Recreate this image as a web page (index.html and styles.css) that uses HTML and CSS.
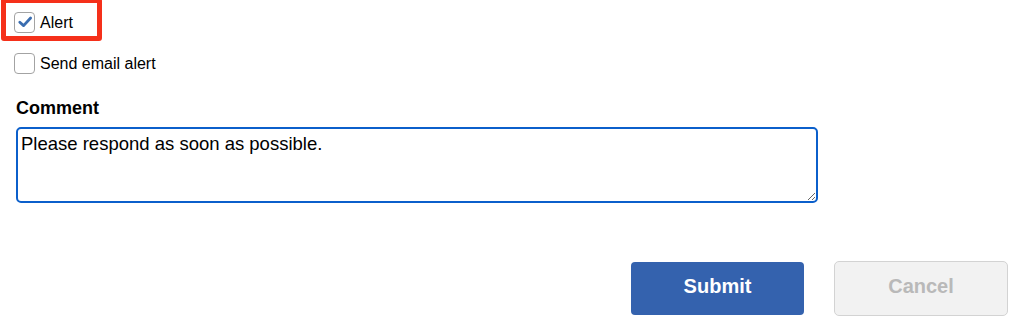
FILE: index.html
```html
<!DOCTYPE html>
<html lang="en">
<head>
<meta charset="utf-8">
<title>Alert form</title>
<link rel="stylesheet" href="styles.css">
</head>
<body>
<form class="form">
  <label class="check-row first">
    <span class="box checked">
      <svg viewBox="0 0 21 21" width="21" height="21" aria-hidden="true"><path d="M5.8 10.2 L9.6 13.6 L16.6 6" fill="none" stroke="#3a6db0" stroke-width="2.8" stroke-linecap="round" stroke-linejoin="round"/></svg>
    </span>
    <span class="check-text">Alert</span>
  </label>
  <label class="check-row second">
    <span class="box"></span>
    <span class="check-text">Send email alert</span>
  </label>
  <div class="field-label">Comment</div>
  <textarea class="comment">Please respond as soon as possible.</textarea>
  <div class="actions">
    <button type="button" class="btn primary">Submit</button>
    <button type="button" class="btn secondary">Cancel</button>
  </div>
  <div class="highlight"></div>
</form>
</body>
</html>
```

FILE: styles.css
```css
html, body {
  margin: 0;
  padding: 0;
  background: #ffffff;
}

body {
  font-family: "Liberation Sans", Arial, sans-serif;
  color: #000;
}

.form {
  position: relative;
  padding-left: 14px;
  padding-top: 12px;
}

.check-row {
  display: flex;
  align-items: center;
  gap: 5px;
  height: 21px;
  font-size: 16px;
}

.check-row.second {
  margin-top: 20px;
}

.box {
  box-sizing: border-box;
  width: 21px;
  height: 21px;
  border: 1.5px solid #a3a3a3;
  border-radius: 4px;
  background: #fff;
  display: flex;
  align-items: center;
  justify-content: center;
  flex: none;
}

.box svg {
  display: block;
  margin: -1.5px;
}

.check-text {
  line-height: 21px;
}

.field-label {
  font-weight: bold;
  font-size: 18px;
  line-height: 22px;
  margin-top: 23px;
  margin-left: 2px;
}

.comment {
  display: block;
  box-sizing: border-box;
  margin: 8px 0 0 2px;
  width: 802px;
  height: 76px;
  border: 2px solid #0b5fcb;
  border-radius: 5px;
  padding: 4px 3px;
  font-family: "Liberation Sans", Arial, sans-serif;
  font-size: 18.5px;
  line-height: 21px;
  color: #000;
  outline: none;
  resize: both;
}

.actions {
  display: flex;
  justify-content: flex-end;
  align-items: center;
  gap: 30px;
  margin-top: 58px;
  padding-right: 7px;
}

.btn {
  box-sizing: border-box;
  font-family: "Liberation Sans", Arial, sans-serif;
  font-weight: bold;
  font-size: 20px;
  line-height: 23px;
  padding: 0 0 4px 0;
  display: flex;
  align-items: center;
  justify-content: center;
}

.primary {
  width: 173px;
  height: 53px;
  background: #3462ae;
  color: #fff;
  border: none;
  border-radius: 4px;
}

.secondary {
  width: 174px;
  height: 55px;
  background: #f2f2f2;
  color: #b9b9b9;
  border: 1px solid #d3d3d3;
  border-radius: 5px;
}

.highlight {
  position: absolute;
  left: 1px;
  top: -2px;
  width: 101px;
  height: 43px;
  box-sizing: border-box;
  border: 5.5px solid #f5301a;
  border-radius: 3px;
  pointer-events: none;
}
```
